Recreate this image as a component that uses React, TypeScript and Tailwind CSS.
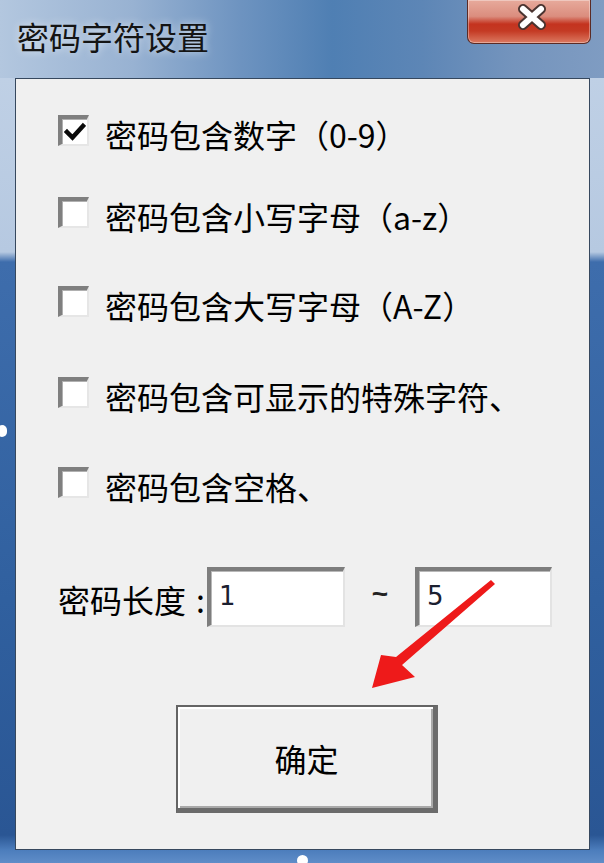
import { Fragment } from 'react';

const options = [
  { label: '密码包含数字（0-9）', checked: true, gap: '' },
  { label: '密码包含小写字母（a-z）', checked: false, gap: 'mt-[51px]' },
  { label: '密码包含大写字母（A-Z）', checked: false, gap: 'mt-[58px]' },
  { label: '密码包含可显示的特殊字符、', checked: false, gap: 'mt-[60px]' },
  { label: '密码包含空格、', checked: false, gap: 'mt-[59px]' },
];

function CheckBox({ checked }: { checked: boolean }) {
  return (
    <div className="w-[31px] h-[31px] shrink-0 bg-white border-t-[4px] border-l-[4px] border-t-[#7f7f7f] border-l-[#7f7f7f] border-b-2 border-r-2 border-b-[#e6e6e6] border-r-[#e6e6e6] shadow-[inset_1px_1px_0_#b0b0b0] flex items-center justify-center">
      {checked && (
        <svg width="22" height="20" viewBox="0 0 22 20" fill="none">
          <path
            d="M3 10L8.5 15.5L19 4"
            stroke="#0a0a0a"
            strokeWidth="4.5"
            strokeLinecap="square"
            strokeLinejoin="miter"
          />
        </svg>
      )}
    </div>
  );
}

function TextBox({ value }: { value: string }) {
  return (
    <div className="h-[60px] bg-white border-t-[4px] border-l-[4px] border-t-[#7d7d7d] border-l-[#7d7d7d] border-b-2 border-r-2 border-b-[#e3e3e3] border-r-[#e3e3e3] shadow-[inset_1px_1px_0_#b8b8b8] flex items-center pl-[8px] pb-[5px]">
      <span className="font-['DejaVu_Sans',sans-serif] text-[26px] leading-[26px] text-[#1b2030]">
        {value}
      </span>
    </div>
  );
}

function CloseButton() {
  return (
    <div className="w-[124px] h-[44px] mr-[13px] rounded-b-[7px] border border-t-0 border-[#5b2b25] bg-[linear-gradient(180deg,#e7aa9c_0%,#db8d7e_38%,#c4331f_56%,#c43a24_72%,#dc7a62_100%)] shadow-[inset_0_0_0_1px_rgba(255,255,255,0.35)] flex items-start justify-center pt-[4px] pl-[6px]">
      <svg width="30" height="26" viewBox="0 0 30 26" fill="none">
        <path d="M6 5L24 21M24 5L6 21" stroke="#4a3430" strokeWidth="10" strokeLinecap="round" />
        <path d="M6 5L24 21M24 5L6 21" stroke="#ffffff" strokeWidth="6" strokeLinecap="round" />
      </svg>
    </div>
  );
}

export default function App() {
  return (
    <div className="relative w-[604px] h-[863px] overflow-hidden flex flex-col bg-[linear-gradient(180deg,#c3d3e7_0px,#b6c9e1_252px,#3e6dac_262px,#30609f_600px,#2a5694_835px,#4c7dbc_850px,#5f8dc8_100%)] font-['Noto_Sans_CJK_SC',sans-serif] text-black">
      {/* title bar */}
      <div className="h-[78px] shrink-0 flex items-start justify-between bg-[linear-gradient(90deg,#b3c7df_0%,#98b2d2_22%,#6d93c0_40%,#4f7fb3_55%,#5d86b6_70%,#7494bd_85%,#7f9cc2_100%)]">
        <div className="pl-[17px] pt-[20px] text-[32px] leading-[32px] text-[#141414] [text-shadow:0_0_8px_rgba(255,255,255,0.7)]">
          密码字符设置
        </div>
        <CloseButton />
      </div>

      {/* client area */}
      <div className="flex-1 ml-[15px] mr-[14px] mb-[13px] border border-[#36485e] bg-[#f0f0f0] flex flex-col pl-[42px] pt-[36px]">
        {options.map((o) => (
          <div key={o.label} className={`flex items-start h-[31px] gap-[16px] ${o.gap}`}>
            <CheckBox checked={o.checked} />
            <span className="mt-[3px] text-[32px] leading-[32px] whitespace-nowrap">{o.label}</span>
          </div>
        ))}

        <div className="mt-[69px] h-[60px] flex items-center">
          <div className="w-[149px] flex items-center text-[32px] leading-[32px] pt-[4px]">
            <span>密码长度</span>
            <span className="ml-[10px]">:</span>
          </div>
          <div className="w-[138px]">
            <TextBox value="1" />
          </div>
          <div className="w-[70px] flex justify-center pb-[6px] font-['Liberation_Sans',sans-serif] font-bold text-[28px] leading-[28px] text-[#222]">
            ~
          </div>
          <div className="w-[137px]">
            <TextBox value="5" />
          </div>
        </div>

        <div className="mt-[78px] ml-[118px] w-[262px] h-[108px] border-2 border-[#646464] border-b-[5px] border-r-[5px] border-b-[#6b6b6b] border-r-[#6b6b6b] bg-[#f0f0f0] shadow-[inset_2px_2px_0_#ffffff,inset_-2px_-2px_0_#a9a9a9] flex items-center justify-center">
          <span className="text-[32px] leading-[32px] pl-[2px]">确定</span>
        </div>
      </div>

      {/* red annotation arrow */}
      <svg
        className="absolute left-0 top-0 pointer-events-none"
        width="604"
        height="863"
        viewBox="0 0 604 863"
      >
        <polygon
          points="372,688 381,655 396,657 491,580 495,584 402,665 415,677"
          fill="#ee1a1a"
        />
      </svg>

      {/* resize grips */}
      <div className="absolute left-[-3px] top-[425px] w-[10px] h-[12px] rounded-full bg-white" />
      <div className="absolute left-[297px] top-[855px] w-[11px] h-[11px] rounded-full bg-white" />
    </div>
  );
}
